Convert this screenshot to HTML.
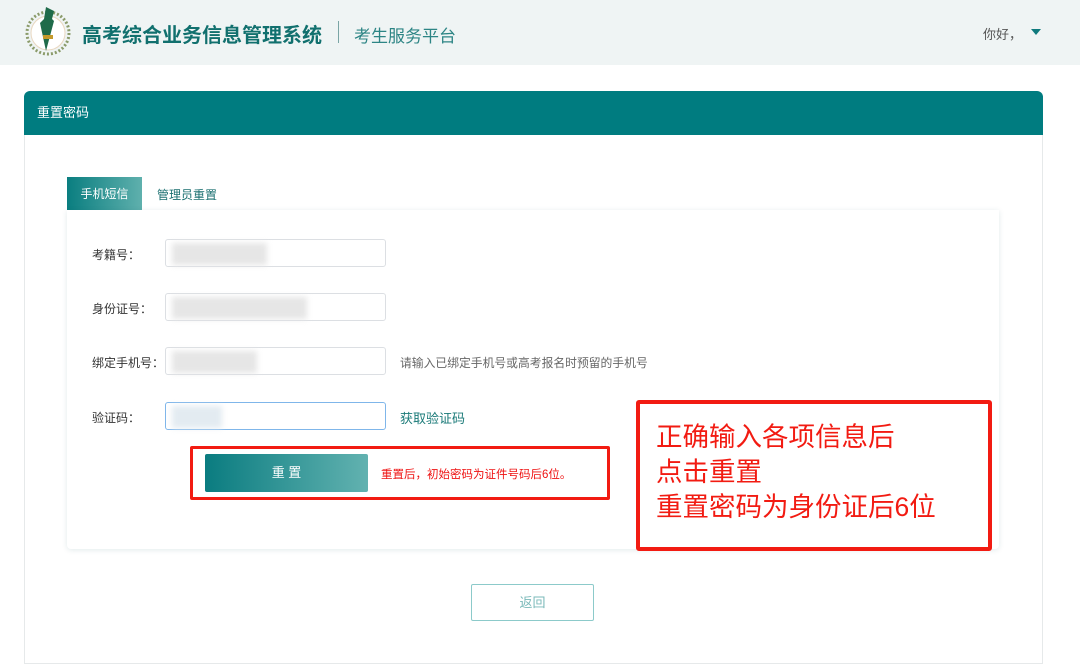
<!DOCTYPE html>
<html><head><meta charset="utf-8"><style>
*{margin:0;padding:0;box-sizing:border-box}
body{width:1080px;height:672px;background:#fff;font-family:"Liberation Sans","Noto Sans CJK SC",sans-serif;position:relative;overflow:hidden}
.hd{position:absolute;left:0;top:0;width:1080px;height:65px;background:#eff4f4}
.abs{position:absolute;white-space:nowrap}
.panel{position:absolute;left:24px;top:91px;width:1019px;height:573px;border:1px solid #e6e9ea;border-top:none;border-radius:6px 6px 0 0}
.ph{position:absolute;left:24px;top:91px;width:1019px;height:44px;background:#007c80;border-radius:6px 6px 0 0;color:#fff;font-size:13px;line-height:44px;padding-left:13px}
.card{position:absolute;left:67px;top:210px;width:932px;height:339px;background:#fff;box-shadow:0 1px 6px rgba(0,80,90,.12);border-radius:0 0 4px 4px}
.lbl{font-size:12px;color:#333}
.inp{position:absolute;left:165px;width:221px;height:28px;border:1px solid #dcdfe3;border-radius:3px;background:#fff}
.blur{position:absolute;background:#e6e6e6;filter:blur(3px)}
</style></head><body>
<div class="hd"></div>
<svg class="abs" style="left:24px;top:5px" width="48" height="54" viewBox="0 0 48 54">
<circle cx="24" cy="28" r="21" fill="none" stroke="#8b9b6a" stroke-width="3" stroke-dasharray="2 2"/>
<circle cx="24" cy="28" r="17" fill="#fff" stroke="#e9d7c0"/>
<path d="M22 2 L30 6 L28 14 L30 16 L22 46 L16 18 L20 14 Z" fill="#1f6b4a"/>
<rect x="19" y="30" width="10" height="4" fill="#c49a2c"/>
</svg>
<div class="abs" style="left:82px;top:19px;font-size:20px;font-weight:bold;color:#11706e">高考综合业务信息管理系统</div>
<div class="abs" style="left:338px;top:21px;width:1px;height:22px;background:#7aa5a5"></div>
<div class="abs" style="left:354px;top:22px;font-size:17px;color:#2d8585">考生服务平台</div>
<div class="abs" style="left:983px;top:24px;font-size:13px;color:#555">你好，</div>
<div class="abs" style="left:1031px;top:29px;width:0;height:0;border-left:5px solid transparent;border-right:5px solid transparent;border-top:6px solid #0f7a7d"></div>

<div class="panel"></div>
<div class="ph">重置密码</div>

<div class="abs" style="left:67px;top:177px;width:75px;height:34px;background:linear-gradient(90deg,#0a7e80,#5fb0ad);color:#fff;font-size:12px;line-height:34px;text-align:center">手机短信</div>
<div class="abs" style="left:157px;top:186px;font-size:12px;color:#1a6f70">管理员重置</div>
<div class="card"></div>

<div class="abs lbl" style="left:92px;top:246px">考籍号：</div>
<div class="inp" style="top:239px"></div>
<div class="blur" style="left:172px;top:243px;width:95px;height:22px"></div>
<div class="abs lbl" style="left:92px;top:300px">身份证号：</div>
<div class="inp" style="top:293px"></div>
<div class="blur" style="left:172px;top:297px;width:135px;height:22px"></div>
<div class="abs lbl" style="left:92px;top:354px">绑定手机号：</div>
<div class="inp" style="top:347px"></div>
<div class="blur" style="left:172px;top:351px;width:85px;height:22px"></div>
<div class="abs" style="left:400px;top:354px;font-size:11.8px;color:#666">请输入已绑定手机号或高考报名时预留的手机号</div>
<div class="abs lbl" style="left:92px;top:409px">验证码：</div>
<div class="inp" style="top:402px;border-color:#7fb6ea"></div>
<div class="blur" style="left:172px;top:406px;width:50px;height:22px;background:#e3ebf1"></div>
<div class="abs" style="left:400px;top:408px;font-size:13px;color:#1a7a78">获取验证码</div>

<div class="abs" style="left:205px;top:454px;width:163px;height:38px;border-radius:2px;background:linear-gradient(90deg,#0a7c80,#62b2b0);color:#fff;font-size:13px;line-height:38px;text-align:center">重 置</div>
<div class="abs" style="left:381px;top:466px;font-size:11.5px;color:#e11">重置后，初始密码为证件号码后6位。</div>
<div class="abs" style="left:190px;top:446px;width:420px;height:54px;border:3px solid #f21b12;border-radius:2px"></div>

<div class="abs" style="left:636px;top:400px;width:356px;height:151px;border:4px solid #f21b12;border-radius:3px;background:#fff"></div>
<div class="abs" style="left:656px;top:420px;font-size:26.5px;line-height:35px;color:#f21b12">正确输入各项信息后<br>点击重置<br>重置密码为身份证后6位</div>

<div class="abs" style="left:471px;top:584px;width:123px;height:37px;border:1px solid #8ccaca;border-radius:2px;color:#7ab9b9;font-size:13px;line-height:35px;text-align:center">返回</div>
</body></html>
